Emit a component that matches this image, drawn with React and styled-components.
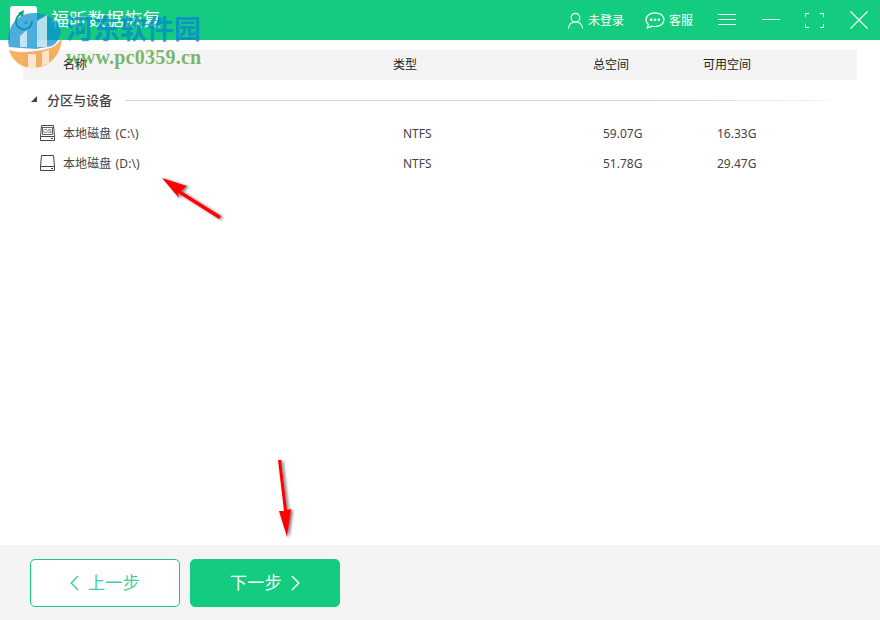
import React from "react";
import styled, { createGlobalStyle } from "styled-components";

const FONT = `"Noto Sans", "Noto Sans CJK SC", sans-serif`;

const Global = createGlobalStyle`
  html, body { margin: 0; padding: 0; background: #fff; }
  body { font-family: ${FONT}; }
`;

const Page = styled.div`
  position: relative;
  width: 880px;
  height: 620px;
  overflow: hidden;
  display: flex;
  flex-direction: column;
  background: #fff;
`;

const TitleBar = styled.div`
  height: 40px;
  flex: none;
  background: #14cc80;
  display: flex;
  align-items: center;
  color: #fff;
  padding-left: 10px;
`;

const AppIcon = styled.div`
  width: 27px;
  height: 34px;
  align-self: flex-end;
  background: #fff;
  border-radius: 3px 3px 0 0;
  display: flex;
  justify-content: center;
  padding-top: 3px;
  box-sizing: border-box;
`;

const AppName = styled.div`
  font-size: 18px;
  margin-left: 14px;
  padding-bottom: 4px;
  letter-spacing: 0.3px;
`;

const TitleActions = styled.div`
  margin-left: auto;
  display: flex;
  align-items: center;
  height: 100%;
`;

const UserLink = styled.div`
  display: flex;
  align-items: center;
  gap: ${(p) => p.$gap}px;
  font-size: 12px;
  width: ${(p) => p.$w}px;
`;

const WinButton = styled.div`
  display: flex;
  align-items: center;
  justify-content: center;
  width: ${(p) => p.$w}px;
  height: 100%;
`;

const Content = styled.div`
  flex: 1;
  padding: 10px 23px 0;
`;

const TableHead = styled.div`
  height: 30px;
  background: #f4f4f4;
  display: grid;
  grid-template-columns: 370px 200px 110px 1fr;
  align-items: center;
  font-size: 12px;
  color: #222;
`;

const HeadCell = styled.div`
  padding-left: ${(p) => p.$pad || 0}px;
  line-height: 28px;
`;

const Section = styled.div`
  display: flex;
  align-items: center;
  height: 20px;
  margin-top: 10px;
  padding-left: 8px;
  font-size: 13px;
  font-weight: 500;
  color: #444;
`;

const SectionLabel = styled.span`
  padding-bottom: 2px;
`;

const Triangle = styled.div`
  width: 0;
  height: 0;
  border-left: 6px solid transparent;
  border-bottom: 6px solid #444;
  margin: 0 10px 3px 0;
`;

const SectionLine = styled.div`
  flex: 1;
  height: 1px;
  margin: 0 26px 0 14px;
  background: linear-gradient(to right, #c5d5dc 0%, #c5d5dc 75%, #f5f8f9 100%);
`;

const Rows = styled.div`
  margin-top: 8px;
`;

const Row = styled.div`
  height: 30px;
  display: grid;
  grid-template-columns: 380px 200px 114px 1fr;
  align-items: center;
  font-size: 12px;
  color: #444;
`;

const NameCell = styled.div`
  display: flex;
  align-items: center;
  gap: 8px;
  padding-left: 17px;
  word-spacing: 1px;
  letter-spacing: 0.1px;
`;

const Footer = styled.div`
  height: 75px;
  flex: none;
  box-sizing: border-box;
  background: #f4f4f4;
  display: flex;
  align-items: flex-start;
  gap: 10px;
  padding: 14px 0 0 30px;
`;

const StepButton = styled.div`
  width: 150px;
  height: 48px;
  box-sizing: border-box;
  border-radius: 5px;
  display: flex;
  align-items: center;
  justify-content: center;
  gap: 9px;
  font-size: 17px;
  letter-spacing: 0.4px;
  line-height: 22px;
  padding-bottom: 1px;
  border: 1px solid #14cc80;
  background: ${(p) => (p.$primary ? "#14cc80" : "#fff")};
  color: ${(p) => (p.$primary ? "#fff" : "#3fd297")};
`;

const Overlay = styled.svg`
  position: absolute;
  left: 0;
  top: 0;
  pointer-events: none;
`;

const WatermarkCn = styled.div`
  position: absolute;
  left: 66px;
  top: 12px;
  font-family: "Noto Sans CJK SC", sans-serif;
  font-size: 27px;
  font-weight: 700;
  line-height: 32px;
  color: rgba(8, 138, 205, 0.82);
  white-space: nowrap;
`;

const WatermarkUrl = styled.div`
  position: absolute;
  left: 66px;
  top: 47px;
  font-family: "Liberation Serif", serif;
  font-size: 20px;
  font-weight: 700;
  line-height: 20px;
  letter-spacing: 0.25px;
  color: rgba(82, 160, 60, 0.75);
  white-space: nowrap;
`;

const Chevron = ({ dir, color }) => (
  <svg width="9" height="16" viewBox="0 0 9 16" fill="none" stroke={color} strokeWidth="1.5">
    <path d={dir === "left" ? "M8 1 L1.2 8 L8 15" : "M1 1 L7.8 8 L1 15"} />
  </svg>
);

const DiskIcon = ({ os }) => (
  <svg width="15" height="16" viewBox="0 0 15 16" fill="none" stroke="#444" strokeWidth="1">
    <path d="M1.5 .5 H13.5 L14.5 11.5 V15.5 H.5 V11.5 Z" />
    <path d="M.5 11.5 H14.5" />
    <path d="M11 13.5 H13" />
    {os && <rect x="2.5" y="2.5" width="10" height="7" strokeWidth="0.8" />}
    {os && (
      <text x="7.5" y="8.2" textAnchor="middle" fontSize="6" fontFamily="Liberation Sans" fill="#444" stroke="none">
        OS
      </text>
    )}
  </svg>
);

const disks = [
  { name: "本地磁盘 (C:\\)", fs: "NTFS", total: "59.07G", free: "16.33G", os: true },
  { name: "本地磁盘 (D:\\)", fs: "NTFS", total: "51.78G", free: "29.47G" },
];

export default function App() {
  return (
    <Page>
      <Global />
      <TitleBar>
        <AppIcon>
          <svg width="22" height="24" viewBox="0 0 22 24" fill="none">
            <path d="M8 5 A8 8 0 1 0 19 12" stroke="#14a070" strokeWidth="2" />
            <path d="M5 4 L11 1 L10 8 Z" fill="#14a070" />
            <path d="M13 11 L15 15 L11 15 Z" fill="#5bbfe0" />
          </svg>
        </AppIcon>
        <AppName>福昕数据恢复</AppName>
        <TitleActions>
          <UserLink $w={78} $gap={4}>
            <svg width="17" height="17" viewBox="0 0 18 18" fill="none" stroke="#fff" strokeWidth="1.2">
              <circle cx="9" cy="6" r="4.6" />
              <path d="M1.5 17.5 C2 12.5 5 10.6 9 10.6 C13 10.6 16 12.5 16.5 17.5" />
            </svg>
            未登录
          </UserLink>
          <UserLink $w={59} $gap={4}>
            <svg width="20" height="17" viewBox="0 0 20 17" fill="none" stroke="#fff" strokeWidth="1.2">
              <path d="M10 .8 C15 .8 19 3.6 19 7.8 C19 12 15 14.6 10 14.6 C9 14.6 8 14.5 7 14.2 L2.2 16 L3.4 12.4 C1.8 11.2 1 9.6 1 7.8 C1 3.6 5 .8 10 .8 Z" />
              <circle cx="6.2" cy="7.8" r=".7" fill="#fff" />
              <circle cx="10" cy="7.8" r=".7" fill="#fff" />
              <circle cx="13.8" cy="7.8" r=".7" fill="#fff" />
            </svg>
            客服
          </UserLink>
          <WinButton $w={45}>
            <svg width="18" height="12" viewBox="0 0 18 12" stroke="#fff" strokeWidth="1">
              <path d="M0 .5 H18 M0 5.5 H18 M0 10.5 H18" />
            </svg>
          </WinButton>
          <WinButton $w={43}>
            <svg width="18" height="2" viewBox="0 0 18 2" stroke="#fff" strokeWidth="1">
              <path d="M0 .5 H18" />
            </svg>
          </WinButton>
          <WinButton $w={45}>
            <svg width="19" height="15" viewBox="0 0 19 15" fill="none" stroke="#fff" strokeWidth="1">
              <path d="M4 .5 H.5 V4 M15 .5 H18.5 V4 M4 14.5 H.5 V11 M15 14.5 H18.5 V11" />
            </svg>
          </WinButton>
          <WinButton $w={43}>
            <svg width="18" height="18" viewBox="0 0 18 18" stroke="#fff" strokeWidth="1.1">
              <path d="M.5 .5 L17.5 17.5 M17.5 .5 L.5 17.5" />
            </svg>
          </WinButton>
        </TitleActions>
      </TitleBar>

      <Content>
        <TableHead>
          <HeadCell $pad={40}>名称</HeadCell>
          <HeadCell>类型</HeadCell>
          <HeadCell>总空间</HeadCell>
          <HeadCell>可用空间</HeadCell>
        </TableHead>
        <Section>
          <Triangle />
          <SectionLabel>分区与设备</SectionLabel>
          <SectionLine />
        </Section>
        <Rows>
          {disks.map((d) => (
            <Row key={d.name}>
              <NameCell>
                <DiskIcon os={d.os} />
                {d.name}
              </NameCell>
              <div>{d.fs}</div>
              <div>{d.total}</div>
              <div>{d.free}</div>
            </Row>
          ))}
        </Rows>
      </Content>

      <Footer>
        <StepButton>
          <Chevron dir="left" color="#3fd297" />
          上一步
        </StepButton>
        <StepButton $primary>
          下一步
          <Chevron dir="right" color="#fff" />
        </StepButton>
      </Footer>

      {/* watermark and annotation arrows sit on top of the window */}
      <Overlay width="880" height="620" viewBox="0 0 880 620">
        <defs>
          <filter id="arrowShadow" x="-30%" y="-30%" width="160%" height="160%">
            <feDropShadow dx="2" dy="1" stdDeviation="1.4" floodColor="#000" floodOpacity="0.55" />
          </filter>
        </defs>
        <g opacity="0.72">
          <path d="M9 47 C5 30 15 13 34 13 C50 13 60 22 61 32 C60 38 57 43 52 46 L36 49 L20 48 Z" fill="#0a8fd0" />
          <path d="M9 50 C22 54 36 52 50 48 C56 46 60 42 62 36 C62 54 50 68 33 68 C20 68 12 60 9 50 Z" fill="#f5942b" />
        </g>
        <g fill="#ffffff" opacity="0.68">
          <path d="M20 47 V36 L27 30 V47 Z" />
          <path d="M37 47 V21 L47 15 V47 Z" />
          <path d="M28 68 V54 H36 V68 Z" />
          <path d="M42 66 V52 L49 50 V63 Z" />
        </g>
        <g filter="url(#arrowShadow)" fill="#f00">
          <path d="M162 178 L187 186 L181 191 L221 216 L219 219 L178 193 L179 198 Z" />
          <path d="M278 460 L281 460 L287 510 L291 509 L287 537 L279 511 L284 511 Z" />
        </g>
      </Overlay>
      <WatermarkCn>河东软件园</WatermarkCn>
      <WatermarkUrl>www.pc0359.cn</WatermarkUrl>
    </Page>
  );
}
